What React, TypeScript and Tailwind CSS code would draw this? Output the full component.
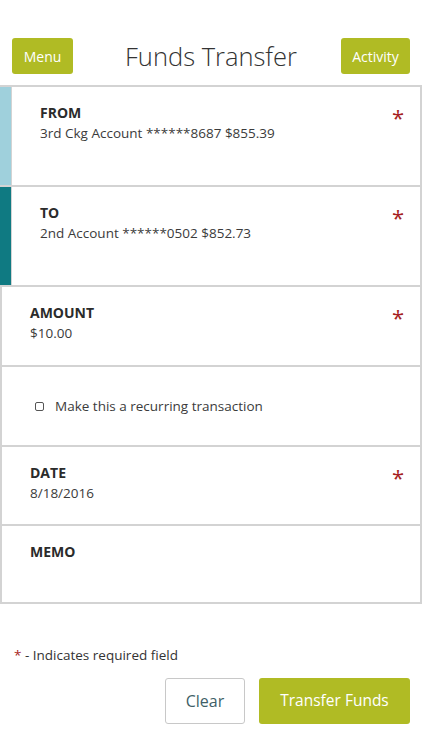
const lime = "bg-[#b0bb24]";

function Req() {
  return <span className="text-[22px] leading-none text-[#a61e22]">*</span>;
}

function Field({ label, value, accent, required, h }: { label: string; value?: string; accent?: string; required?: boolean; h: string }) {
  return (
    <div className={`flex border-b-2 border-[#d3d3d3] ${h}`}>
      {accent ? <div className={`w-[12px] shrink-0 ${accent} border-r border-[#d3d3d3]`} /> : <div className="w-[2px] shrink-0 bg-[#d3d3d3]" />}
      <div className="flex flex-1 justify-between pt-4 pr-[16px] pl-[28px]">
        <div className="text-[13.5px] leading-[20px]">
          <div className="text-[14px] font-bold text-[#2b2b2b]">{label}</div>
          {value && <div className="text-[#3b3b3b]">{value}</div>}
        </div>
        {required && <div className="pt-[3px]"><Req /></div>}
      </div>
      <div className="w-[2px] shrink-0 bg-[#d3d3d3]" />
    </div>
  );
}

export default function App() {
  return (
    <div className="min-h-[750px] w-[422px] bg-white" style={{ fontFamily: '"Open Sans", "Liberation Sans", sans-serif' }}>
      <div className="grid grid-cols-[1fr_auto_1fr] items-center px-[12px] pt-[38px] pb-[11px]">
        <div>
          <button className={`${lime} h-[36px] w-[61px] rounded-[3px] text-[14px] text-white`}>Menu</button>
        </div>
        <h1 className="text-[25.5px] leading-[36px] font-light text-[#333]">Funds Transfer</h1>
        <div className="flex justify-end">
          <button className={`${lime} h-[36px] w-[69px] rounded-[3px] text-[14px] text-white`}>Activity</button>
        </div>
      </div>
      <div className="border-t-2 border-[#d3d3d3]">
        <Field label="FROM" value="3rd Ckg Account ******8687 $855.39" accent="bg-[#9fd0dc]" required h="h-[100px]" />
        <Field label="TO" value="2nd Account ******0502 $852.73" accent="bg-[#0f7a82]" required h="h-[100px]" />
        <Field label="AMOUNT" value="$10.00" required h="h-[80px]" />
        <div className="flex h-[80px] border-b-2 border-[#d3d3d3]">
          <div className="w-[2px] shrink-0 bg-[#d3d3d3]" />
          <div className="flex flex-1 items-center gap-[11px] pl-[33px]">
            <span className="h-[9px] w-[9px] rounded-[2px] border border-[#555]" />
            <span className="text-[13.5px] text-[#3b3b3b]">Make this a recurring transaction</span>
          </div>
          <div className="w-[2px] shrink-0 bg-[#d3d3d3]" />
        </div>
        <Field label="DATE" value="8/18/2016" required h="h-[79px]" />
        <Field label="MEMO" h="h-[78px]" />
      </div>
      <div className="mt-[41px] pl-[14px] text-[13.5px] leading-[20px] text-[#333]">
        <span className="text-[#a61e22]">*</span> - Indicates required field
      </div>
      <div className="mt-[13px] flex justify-end gap-[14px] pr-[12px]">
        <button className="h-[46px] w-[80px] rounded-[3px] border border-[#c8c8c8] bg-white text-[16px] text-[#3f5f68]">Clear</button>
        <button className={`${lime} h-[46px] w-[151px] rounded-[3px] text-[15.5px] text-white`}>Transfer Funds</button>
      </div>
    </div>
  );
}
